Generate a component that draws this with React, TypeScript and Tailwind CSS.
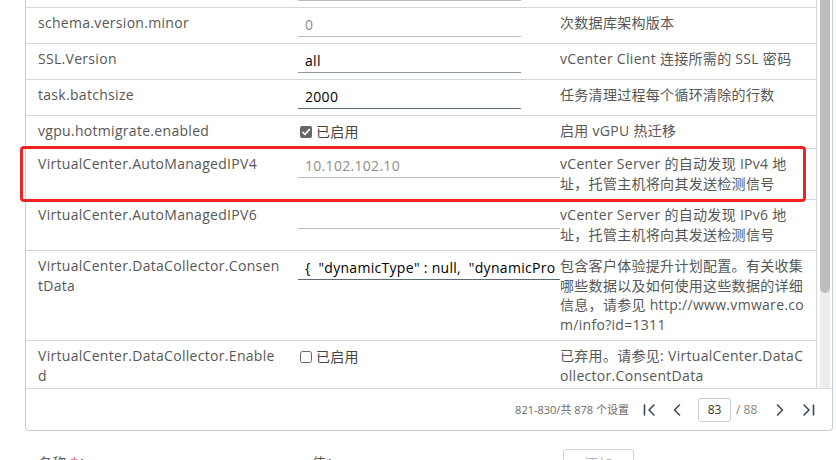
import React from 'react';

type Row = {
  name: string;
  value?: string;
  muted?: boolean;
  line?: 'light' | 'mid' | 'dark';
  wide?: boolean;
  check?: boolean;
  checked?: boolean;
  desc: string;
};

// labels keep the same wrap points as the original table (\n = hard break)
const rows: Row[] = [
  { name: '', value: '', line: 'light', desc: '' },
  { name: 'schema.version.minor', value: '0', muted: true, line: 'light', desc: '次数据库架构版本' },
  { name: 'SSL.Version', value: 'all', line: 'mid', desc: 'vCenter Client 连接所需的 SSL 密码' },
  { name: 'task.batchsize', value: '2000', line: 'dark', desc: '任务清理过程每个循环清除的行数' },
  { name: 'vgpu.hotmigrate.enabled', check: true, checked: true, desc: '启用 vGPU 热迁移' },
  {
    name: 'VirtualCenter.AutoManagedIPV4',
    value: '10.102.102.10',
    muted: true,
    line: 'light',
    wide: true,
    desc: 'vCenter Server 的自动发现 IPv4 地址，托管主机将向其发送检测信号',
  },
  {
    name: 'VirtualCenter.AutoManagedIPV6',
    value: '',
    line: 'light',
    wide: true,
    desc: 'vCenter Server 的自动发现 IPv6 地址，托管主机将向其发送检测信号',
  },
  {
    name: 'VirtualCenter.DataCollector.Consen\ntData',
    value: '{  "dynamicType" : null,  "dynamicProperty" : [ ],  "consentConfigurations" : [ ] }',
    line: 'dark',
    wide: true,
    desc: '包含客户体验提升计划配置。有关收集哪些数据以及如何使用这些数据的详细信息，请参见 http://www.vmware.com/info?id=1311',
  },
  {
    name: 'VirtualCenter.DataCollector.Enable\nd',
    check: true,
    checked: false,
    desc: '已弃用。请参见: VirtualCenter.DataCollector.ConsentData',
  },
];

const lineColor = {
  light: 'border-[#b9bec3]',
  mid: 'border-[#8a949d]',
  dark: 'border-[#5d6b76]',
};

function CheckBox({ checked }: { checked: boolean }) {
  return (
    <svg width="12" height="12" viewBox="0 0 12 12" className="ml-[2px] shrink-0">
      {checked ? (
        <>
          <rect x="0" y="0" width="12" height="12" rx="2" fill="#666" />
          <path d="M2.8 6.2 L5 8.4 L9.3 3.6" stroke="white" strokeWidth="1.6" fill="none" strokeLinecap="round" strokeLinejoin="round" />
        </>
      ) : (
        <rect x="0.5" y="0.5" width="11" height="11" rx="2" fill="white" stroke="#666" strokeWidth="1" />
      )}
    </svg>
  );
}

function SettingRow({ row }: { row: Row }) {
  const nameLines = row.name.split('\n');
  return (
    <div className="grid grid-cols-[260px_262px_1fr] border-b border-[#d4d7da]">
      <div className="pl-3 pr-1 pt-[5px] pb-[6px] whitespace-nowrap">
        {nameLines.map((l, i) => (
          <div key={i}>{l}</div>
        ))}
      </div>
      <div className="pl-3 pt-[5px] pb-[6px]">
        {row.check ? (
          <div className="flex items-center gap-[4px] h-[21px] text-[#444]">
            <CheckBox checked={!!row.checked} />
            <span>已启用</span>
          </div>
        ) : (
          <input
            readOnly
            value={row.value}
            className={`block h-[24px] pl-[7px] pr-[5px] border-b outline-none bg-transparent ${
              row.wide ? 'w-[262px]' : 'w-[223px]'
            } ${lineColor[row.line || 'light']} ${row.muted ? 'text-[#8e8e8e]' : 'text-black'}`}
          />
        )}
      </div>
      <div className="pl-3 pr-[10px] pt-[5px] pb-[6px] break-all">{row.desc}</div>
    </div>
  );
}

function PageIcon({ kind }: { kind: 'first' | 'prev' | 'next' | 'last' }) {
  const d = {
    first: 'M3.5 3 V13 M13 3 L8 8 L13 13',
    prev: 'M10.5 3 L5.5 8 L10.5 13',
    next: 'M5.5 3 L10.5 8 L5.5 13',
    last: 'M12.5 3 V13 M3 3 L8 8 L3 13',
  }[kind];
  return (
    <svg width="16" height="16" viewBox="0 0 16 16" className="shrink-0">
      <path d={d} stroke="#3e4a56" strokeWidth="1.6" fill="none" strokeLinecap="round" strokeLinejoin="round" />
    </svg>
  );
}

export default function App() {
  return (
    <div className="relative w-[836px] h-[460px] overflow-hidden bg-white font-['Open_Sans','Noto_Sans_CJK_SC',sans-serif] text-[14px] leading-[19.5px] tracking-[0.3px] text-[#575757]">
      <div className="ml-[25px] w-[808px] border-x border-b border-[#c9ced3] rounded-b-[4px]">
        <div className="flex h-[388px]">
          <div className="w-[791px] h-full overflow-hidden border-r border-[#d4d7da]">
            <div className="-mt-[28px]">
              {rows.map((r, i) => (
                <SettingRow key={i} row={r} />
              ))}
            </div>
          </div>
          <div className="flex-1 flex pl-[3px] pr-[2px]">
            <div className="flex-1 bg-[#ececec]">
              <div className="h-[293px] bg-[#bdbdbd] rounded-b-[5px]" />
            </div>
          </div>
        </div>
        <div className="flex items-center justify-end h-[42px] border-t border-[#d4d7da] pr-[15px] leading-[16px]">
          <span className="whitespace-nowrap text-[11px] tracking-normal text-[#6b6b6b] mr-[12px]">
            821-830/共 878 个设置
          </span>
          <PageIcon kind="first" />
          <span className="w-[12px]" />
          <PageIcon kind="prev" />
          <span className="w-[13px]" />
          <div className="w-[33px] h-[24px] border border-[#c9ced3] rounded-[3px] flex items-center justify-center text-[12px] tracking-normal text-[#333]">
            83
          </div>
          <span className="w-[22px] ml-[5px] whitespace-nowrap text-[12px] tracking-normal text-[#8a8a8a]">/ 88</span>
          <span className="w-[14px]" />
          <PageIcon kind="next" />
          <span className="w-[13px]" />
          <PageIcon kind="last" />
        </div>
      </div>

      <div className="grid grid-cols-[274px_251px_auto] pl-[38px] mt-[18px]">
        <div className="pt-[4px]">
          名称 <span className="text-[#e0584a]">*</span>：
        </div>
        <div className="pt-[4px]">值：</div>
        <button className="w-[71px] h-[30px] border border-[#d0d3d6] rounded-[3px] text-[#b5b5b5] bg-white">添加</button>
      </div>

      <div className="absolute left-[20px] top-[146px] w-[786px] h-[56px] border-[3px] border-[#f52222] rounded-[4px] pointer-events-none" />
    </div>
  );
}
